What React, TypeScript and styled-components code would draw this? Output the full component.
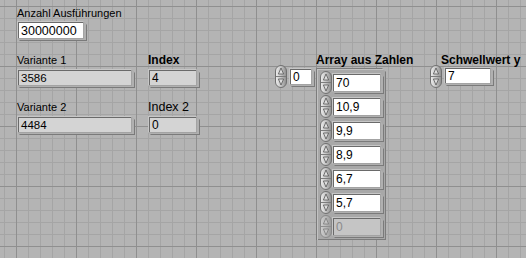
import React, { useId } from "react";
import styled, { createGlobalStyle } from "styled-components";

const Global = createGlobalStyle`
  html, body { margin: 0; padding: 0; height: 100%; }
  body { font-family: "Liberation Sans", Arial, sans-serif; background: #b4b4b4; }
  #root { height: 100%; }
`;

const Panel = styled.div`
  width: 526px;
  height: 258px;
  box-sizing: border-box;
  overflow: hidden;
  padding: 6px 0 0 17px;
  display: flex;
  flex-direction: column;
  background-color: #b4b4b4;
  background-image:
    linear-gradient(to right, #8f8f8f 1px, transparent 1px),
    linear-gradient(to bottom, #8f8f8f 1px, transparent 1px),
    linear-gradient(to right, #a5a5a5 1px, transparent 1px),
    linear-gradient(to bottom, #a5a5a5 1px, transparent 1px);
  background-size: 60px 60px, 60px 60px, 12px 12px, 12px 12px;
  background-position: 16px 0, 0 6px, 4px 0, 0 6px;
`;

const Group = styled.div<{ $w?: number; $ml?: number }>`
  display: flex;
  flex-direction: column;
  align-items: flex-start;
  flex: none;
  margin-left: ${(p) => p.$ml ?? 0}px;
  ${(p) => (p.$w ? `width: ${p.$w}px;` : "")}
`;

const Row = styled.div<{ $mt?: number }>`
  display: flex;
  align-items: flex-start;
  margin-top: ${(p) => p.$mt ?? 0}px;
`;

const Label = styled.div<{ $bold?: boolean; $size?: number; $indent?: number; $gap?: number; $top?: number }>`
  font-size: ${(p) => p.$size ?? (p.$bold ? 12 : 11)}px;
  font-weight: ${(p) => (p.$bold ? 700 : 400)};
  line-height: 14px;
  height: 14px;
  color: #000;
  white-space: nowrap;
  margin-top: ${(p) => p.$top ?? 0}px;
  margin-left: ${(p) => p.$indent ?? 0}px;
  margin-bottom: ${(p) => p.$gap ?? 2}px;
`;

const Frame = styled.div<{ $w: number; $h: number; $mt?: number }>`
  box-sizing: border-box;
  width: ${(p) => p.$w}px;
  height: ${(p) => p.$h}px;
  margin-top: ${(p) => p.$mt ?? 0}px;
  flex: none;
  padding: 1px 4px 3px 1px;
  background: #a3a3a3;
  box-shadow: inset 1px 1px 0 #c6c6c6, inset -1px -1px 0 #7a7a7a, inset -3px -2px 0 #b0b0b0;
  clip-path: polygon(0 0, calc(100% - 4px) 0, 100% 4px, 100% 100%, 3px 100%, 0 calc(100% - 3px));
  display: flex;
`;

type Kind = "control" | "indicator" | "disabled";

const Field = styled.div<{ $kind: Kind; $size?: number }>`
  flex: 1;
  box-sizing: border-box;
  border-top: 1px solid #6a6a6a;
  border-left: 1px solid #6a6a6a;
  background: ${(p) => (p.$kind === "control" ? "#ffffff" : p.$kind === "indicator" ? "#d4d4d4" : "#c5c5c5")};
  color: ${(p) => (p.$kind === "disabled" ? "#8a8a8a" : "#000")};
  font-size: ${(p) => p.$size ?? 12}px;
  padding-left: 2px;
  display: flex;
  align-items: center;
  white-space: nowrap;
`;

const ArrayBox = styled.div`
  box-sizing: border-box;
  width: 70px;
  padding: 3px 2px 2px 4px;
  display: flex;
  flex-direction: column;
  gap: 1px;
  background: #a8a8a8;
  box-shadow: inset 1px 1px 0 #7c7c7c, inset 2px 2px 0 #c2c2c2, inset -1px -1px 0 #7c7c7c;
  clip-path: polygon(0 0, calc(100% - 4px) 0, 100% 4px, 100% 100%, 0 100%);
`;

const Element = styled.div`
  display: flex;
  align-items: flex-start;
  height: 23px;
`;

const StepWrap = styled.div<{ $dim?: boolean; $mr?: number }>`
  width: 12px;
  height: 23px;
  flex: none;
  margin-right: ${(p) => p.$mr ?? 0}px;
  opacity: ${(p) => (p.$dim ? 0.55 : 1)};
  svg { display: block; }
`;

function Stepper({ dim, mr }: { dim?: boolean; mr?: number }) {
  const id = useId().replace(/:/g, "");
  return (
    <StepWrap $dim={dim} $mr={mr}>
      <svg width="12" height="23" viewBox="0 0 12 23">
        <defs>
          <linearGradient id={`g${id}`} x1="0" x2="1" y1="0" y2="0">
            <stop offset="0" stopColor="#eeeeee" />
            <stop offset="0.45" stopColor="#c9c9c9" />
            <stop offset="1" stopColor="#8c8c8c" />
          </linearGradient>
        </defs>
        <rect x="0.5" y="0.5" width="11" height="22" rx="5.5" fill={`url(#g${id})`} stroke="#707070" />
        <line x1="1" y1="11.5" x2="11" y2="11.5" stroke="#7c7c7c" />
        <path d="M6 3 L8.6 9 L3.4 9 Z" fill="#dcdcdc" stroke="#555" strokeWidth="0.8" strokeLinejoin="round" />
        <path d="M6 20 L8.6 14 L3.4 14 Z" fill="#dcdcdc" stroke="#555" strokeWidth="0.8" strokeLinejoin="round" />
      </svg>
    </StepWrap>
  );
}

function NumBox({ w, h, mt, kind, size, value }: { w: number; h: number; mt?: number; kind: Kind; size?: number; value: string }) {
  return (
    <Frame $w={w} $h={h} $mt={mt}>
      <Field $kind={kind} $size={size}>{value}</Field>
    </Frame>
  );
}

const arrayValues = ["70", "10,9", "9,9", "8,9", "6,7", "5,7"];

export default function App() {
  return (
    <>
      <Global />
      <Panel>
        <Group>
          <Label $gap={1}>Anzahl Ausführungen</Label>
          <NumBox w={70} h={20} kind="control" size={12.5} value="30000000" />
        </Group>
        <Row $mt={12}>
          <Group $w={131}>
            <Label>Variante 1</Label>
            <NumBox w={118} h={19} kind="indicator" size={11.5} value="3586" />
            <Label $top={12}>Variante 2</Label>
            <NumBox w={118} h={19} kind="indicator" size={11.5} value="4484" />
          </Group>
          <Group $w={127}>
            <Label $bold>Index</Label>
            <NumBox w={52} h={19} kind="indicator" size={12} value="4" />
            <Label $top={12} $size={12.5}>Index 2</Label>
            <NumBox w={52} h={19} kind="indicator" size={12} value="0" />
          </Group>
          <Row $mt={12}>
            <Stepper mr={2} />
            <NumBox w={26} h={19} mt={3} kind="control" size={12} value="0" />
          </Row>
          <Group $w={70} $ml={1}>
            <Label $bold $gap={1}>Array aus Zahlen</Label>
            <ArrayBox>
              {arrayValues.map((v) => (
                <Element key={v}>
                  <Stepper />
                  <NumBox w={52} h={21} mt={2} kind="control" size={12} value={v} />
                </Element>
              ))}
              <Element>
                <Stepper dim />
                <NumBox w={52} h={21} mt={2} kind="disabled" size={12} value="0" />
              </Element>
            </ArrayBox>
          </Group>
          <Group $ml={44}>
            <Label $bold $indent={11} $gap={-2}>Schwellwert y</Label>
            <Row>
              <Stepper mr={2} />
              <NumBox w={50} h={19} mt={2} kind="control" size={12} value="7" />
            </Row>
          </Group>
        </Row>
      </Panel>
    </>
  );
}
